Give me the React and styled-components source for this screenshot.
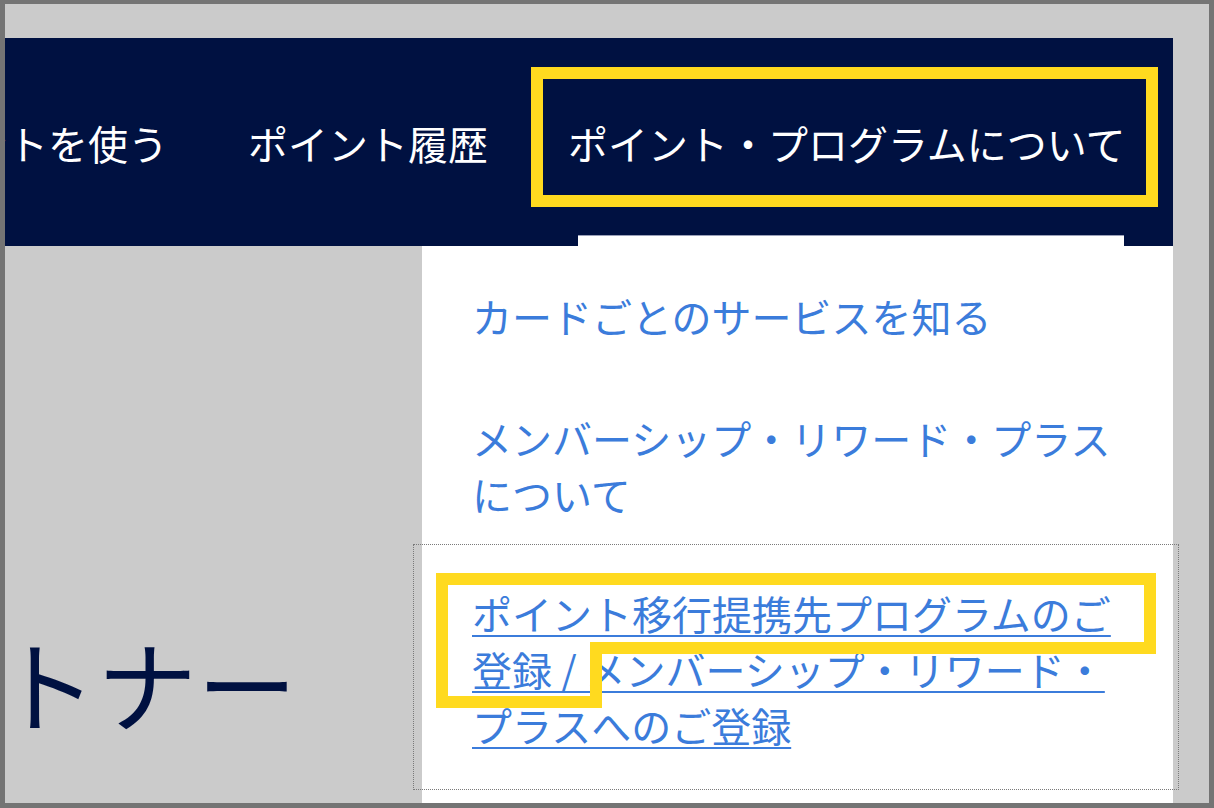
import React from 'react';
import styled, { createGlobalStyle } from 'styled-components';

const GlobalStyle = createGlobalStyle`
  html, body {
    margin: 0;
    padding: 0;
    background: #cbcbcb;
  }
  body {
    font-family: "Noto Sans CJK JP", "Noto Sans", sans-serif;
  }
`;

const Frame = styled.div`
  position: relative;
  width: 1214px;
  height: 808px;
  box-sizing: border-box;
  border-style: solid;
  border-color: #747474;
  border-width: 4px 5px 5px 5px;
  background: #cbcbcb;
  padding: 34px 36px 0 0;
  overflow: hidden;
`;

const NavBar = styled.nav`
  height: 208px;
  background: #001141;
  display: flex;
  align-items: stretch;
`;

const NavList = styled.ul`
  display: flex;
  gap: 80px;
  margin: 0 0 0 -117px;
  padding: 0;
  list-style: none;
`;

const NavItem = styled.li`
  position: relative;
  display: flex;
  align-items: center;
  padding-top: 2px;
  color: #ffffff;
  font-size: 40px;
  line-height: 1;
  white-space: nowrap;
  z-index: ${(p) => (p.$open ? 2 : 1)};

  ${(p) => p.$open && `
    &::after {
      content: '';
      position: absolute;
      left: 10px;
      right: 2px;
      bottom: 0;
      height: 10px;
      background: #ffffff;
      box-shadow: 0 -1px 0 #9aa0b8;
    }
  `}
`;

const Highlight = styled.span`
  position: absolute;
  left: -37px;
  right: -32px;
  top: 29px;
  bottom: 39px;
  border: 12px solid #ffda1f;
  box-sizing: border-box;
  pointer-events: none;
`;

const Dropdown = styled.ul`
  position: absolute;
  left: -146px;
  top: 100%;
  width: 751px;
  height: 600px;
  margin: 0;
  padding: 0;
  list-style: none;
  background: #ffffff;
  box-sizing: border-box;
`;

const DropItem = styled.li`
  position: relative;
  padding: ${(p) => (p.$focused ? '40px 50px 36px 58px' : '33px 50px 33px 50px')};
  margin: ${(p) => (p.$focused ? '-11px -6px 0 -9px' : '0')};
  border: ${(p) => (p.$focused ? '1px dotted #7a7a7a' : 'none')};
  font-size: 40px;
  line-height: 56px;
  white-space: normal;

  &:first-child {
    padding-top: 42px;
  }
`;

const DropLink = styled.a`
  color: #3b7cdb;
  text-decoration: ${(p) => (p.$underline ? 'underline' : 'none')};
  text-decoration-thickness: 2px;
  text-underline-offset: 5px;
`;

const Mark = styled.svg`
  position: absolute;
  left: 0;
  top: 0;
  width: 100%;
  height: 100%;
  overflow: visible;
  pointer-events: none;
`;

const Content = styled.section`
  padding: 386px 0 0 0;
`;

const Heading = styled.h1`
  margin: 0 0 0 -8px;
  color: #001141;
  font-size: 100px;
  font-weight: 400;
  line-height: 1;
`;

export default function App() {
  return (
    <>
      <GlobalStyle />
      <Frame>
        <NavBar>
          <NavList>
            <NavItem>ポイントを使う</NavItem>
            <NavItem>ポイント履歴</NavItem>
            <NavItem $open>
              ポイント・プログラムについて
              <Highlight />
              <Dropdown>
                <DropItem>
                  <DropLink>カードごとのサービスを知る</DropLink>
                </DropItem>
                <DropItem>
                  <DropLink>メンバーシップ・リワード・プラスについて</DropLink>
                </DropItem>
                <DropItem $focused>
                  <DropLink $underline>
                    ポイント移行提携先プログラムのご登録 / メンバーシップ・リワード・プラスへのご登録
                  </DropLink>
                  <Mark>
                    <polygon
                      points="28,34 736,34 736,103 182,103 182,157 28,157"
                      fill="none"
                      stroke="#ffda1f"
                      strokeWidth="12"
                    />
                  </Mark>
                </DropItem>
              </Dropdown>
            </NavItem>
          </NavList>
        </NavBar>
        <Content>
          <Heading>トナー</Heading>
        </Content>
      </Frame>
    </>
  );
}
